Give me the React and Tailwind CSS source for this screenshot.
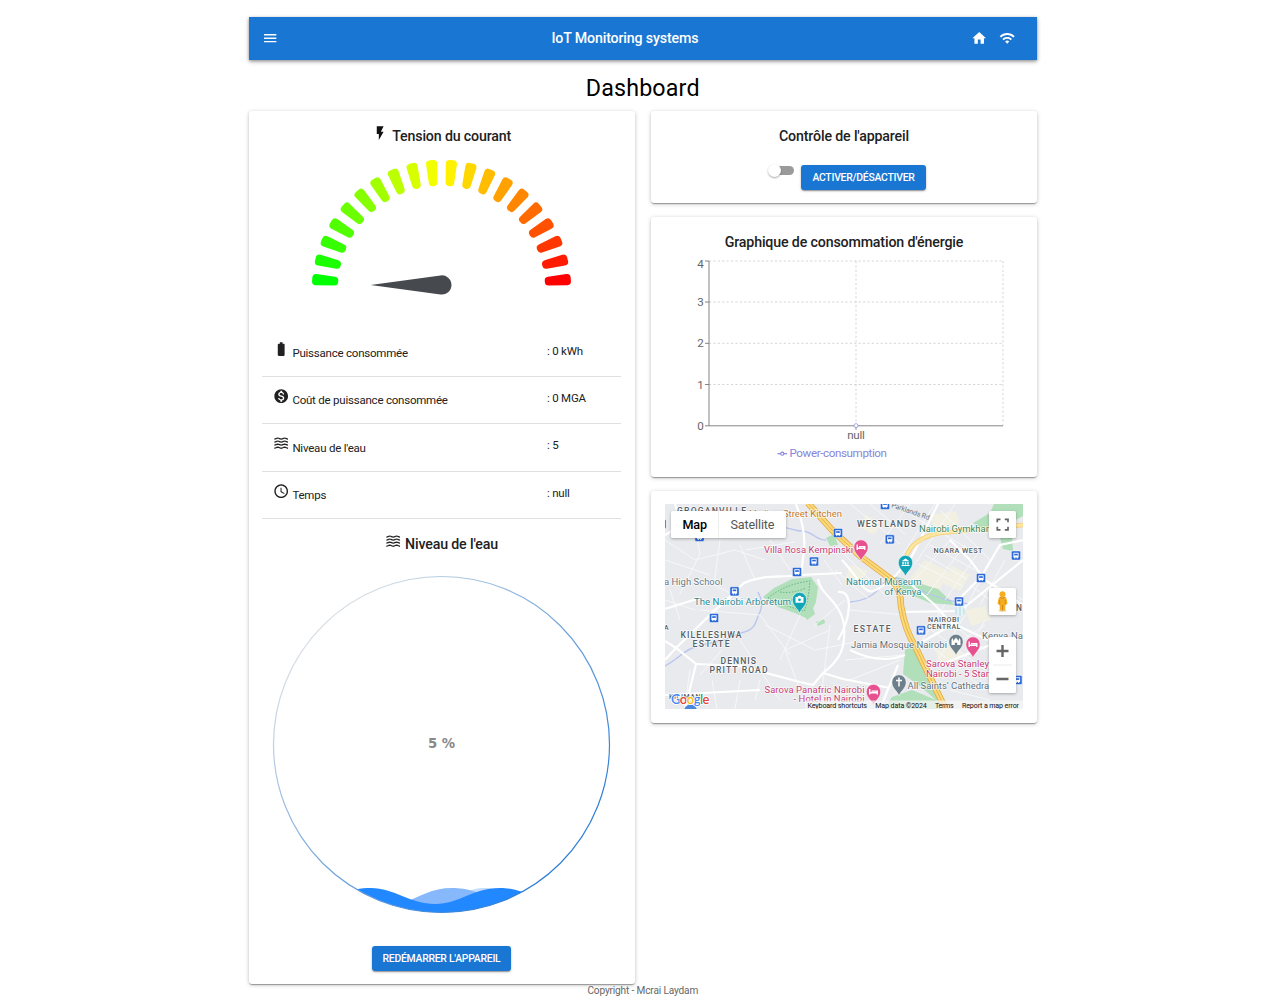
import React from "react";
import {
  MdMenu,
  MdHome,
  MdWifi,
  MdFlashOn,
  MdBatteryFull,
  MdMonetizationOn,
  MdWaves,
  MdAccessTime,
} from "react-icons/md";

const cardClass =
  "bg-white rounded-[3px] shadow-[0_2px_1px_-1px_rgba(0,0,0,0.2),0_1px_1px_rgba(0,0,0,0.14),0_1px_4px_rgba(0,0,0,0.24)]";
const titleClass = "font-medium text-[14.2px] leading-[22px] tracking-[-0.15px] text-[#212121]";
const buttonClass =
  "rounded-[3px] bg-[#1976d2] text-white font-medium text-[10.4px] leading-[25px] h-[25px] tracking-[-0.25px] text-center shadow-[0_2px_1px_-1px_rgba(0,0,0,0.2),0_1px_2px_rgba(0,0,0,0.2),0_1px_3px_rgba(0,0,0,0.12)]";

function polar(cx, cy, r, deg) {
  const a = (deg * Math.PI) / 180;
  return [cx - r * Math.cos(a), cy - r * Math.sin(a)];
}

function Gauge() {
  const cx = 179.5;
  const cy = 139.5;
  const segments = Array.from({ length: 20 }, (_, i) => {
    const mid = 4.5 + i * 9;
    const round = 3.8;
    const outer = 129.7 - round;
    const inner = 103.6 + round;
    const ho = 2.55 - ((round / outer) * 180) / Math.PI;
    const hi = 2.3 - ((round / inner) * 180) / Math.PI;
    const pts = [
      polar(cx, cy, outer, mid - ho),
      polar(cx, cy, outer, mid + ho),
      polar(cx, cy, inner, mid + hi),
      polar(cx, cy, inner, mid - hi),
    ];
    return {
      points: pts.map((p) => p.map((v) => v.toFixed(2)).join(",")).join(" "),
      color: `hsl(${120 - (120 * i) / 19} 100% 50%)`,
    };
  });
  return (
    <svg className="block w-[359px] h-[182px]" viewBox="0 0 359 182">
      {segments.map((s) => (
        <polygon key={s.points} points={s.points} fill={s.color} stroke={s.color} strokeWidth="7.6" strokeLinejoin="round" />
      ))}
      <path d="M108.5 135 L178.5 125.4 A9.6 9.6 0 1 1 178.5 144.4 Z" fill="#464a4f" />
    </svg>
  );
}

function Tank() {
  return (
    <svg className="block w-[359px] h-[380px]" viewBox="262 560 359 380">
      <defs>
        <linearGradient id="ring" x1="0.15" y1="0.15" x2="0.85" y2="0.8">
          <stop offset="0" stopColor="#d9dfe4" />
          <stop offset="0.35" stopColor="#8fb6de" />
          <stop offset="1" stopColor="#2f7fd6" />
        </linearGradient>
        <clipPath id="tank">
          <circle cx="441.5" cy="744.5" r="168" />
        </clipPath>
      </defs>
      <g clipPath="url(#tank)">
        <path d="M440 905 C460 898 466 888 484 888 C505 888 515 892 530 895 V920 H440Z" fill="#c5ddfa" />
        <path d="M400 905 C420 896 432 888 452 888 C468 888 478 892 500 902 V920 H400Z" fill="#86b8fb" />
        <path d="M340 896 C352 889 360 888 371 888 C394 888 410 904 435 904 C460 904 472 888 500 888 C510 888 516 890 530 894 V920 H340Z" fill="#2288ff" />
      </g>
      <circle cx="441.5" cy="744.5" r="168" fill="none" stroke="url(#ring)" strokeWidth="1.2" />
      <text x="441.5" y="748.3" textAnchor="middle" fontFamily="DejaVu Sans" fontWeight="700" fontSize="13.3" fill="#888888">
        5 %
      </text>
    </svg>
  );
}

const rows = [
  [MdBatteryFull, "Puissance consommée", ": 0 kWh"],
  [MdMonetizationOn, "Coût de puissance consommée", ": 0 MGA"],
  [MdWaves, "Niveau de l'eau", ": 5"],
  [MdAccessTime, "Temps", ": null"],
];

function Chart() {
  return (
    <svg className="block w-[386px] h-[215px]" viewBox="651 253 386 215" fontFamily="Roboto" fontSize="11.6" fill="#666666">
      <g stroke="#cccccc" strokeWidth="0.8" strokeDasharray="2.2 2.2">
        {[261, 302, 343.3, 384.5].map((y) => (
          <path key={y} d={`M709 ${y}H1003`} />
        ))}
        <path d="M856 261V425.5M1003 261V425.5" />
      </g>
      <path d="M709 261V425.8H1003M705 261h4M705 302h4M705 343.3h4M705 384.5h4M705 425.8h4M856 425.8v4" stroke="#777777" strokeWidth="0.9" fill="none" />
      {[[4, 264], [3, 302], [2, 343.3], [1, 384.5], [0, 426]].map(([n, y]) => (
        <text key={n} x="703.8" y={y + 4} textAnchor="end">
          {n}
        </text>
      ))}
      <text x="856" y="439" textAnchor="middle" textLength="17.5">null</text>
      <circle cx="856" cy="425.6" r="2" fill="white" stroke="#8884d8" strokeWidth="0.7" />
      <path d="M777.5 453.7h9.5" stroke="#8884d8" strokeWidth="1.2" />
      <circle cx="782.3" cy="453.7" r="1.6" fill="white" stroke="#8884d8" strokeWidth="1.1" />
      <text x="789.5" y="456.5" fill="#8884d8" textLength="97.5">
        Power-consumption
      </text>
    </svg>
  );
}

function Pin({ x, y, color, kind }) {
  return (
    <g transform={`translate(${x} ${y})`}>
      <path d="M0 14 C-1.5 9 -7.2 6.5 -7.2 0 A7.2 7.2 0 0 1 7.2 0 C7.2 6.5 1.5 9 0 14Z" fill={color} stroke="white" strokeWidth="0.6" />
      {kind === "bed" && <path d="M-3.8 -2.5V3M-3.8 1.3H3.8V3M-2 -0.4H3.8V1.3" stroke="white" strokeWidth="1.4" fill="none" />}
      {kind === "camera" && (
        <>
          <path d="M-4 -2.5h2l1-1.2h2l1 1.2h2v5.8h-8z" fill="white" />
          <circle cx="0" cy="0.3" r="1.4" fill={color} />
        </>
      )}
      {kind === "museum" && <path d="M-4 -1.2L0 -4L4 -1.2ZM-3.2 -0.6h1.4V2h-1.4zM-0.7 -0.6h1.4V2h-1.4zM1.8 -0.6h1.4V2h-1.4zM-4 2.5h8v1.1h-8z" fill="white" />}
      {kind === "mosque" && <path d="M-4.5 3.5V-1.5L-3.6 -3.5L-2.7 -1.5V0C-2.2 -2 -0.8 -2.4 0 -4C0.8 -2.4 2.2 -2 2.7 0V-1.5L3.6 -3.5L4.5 -1.5V3.5H1.2V1.2H-1.2V3.5Z" fill="white" />}
      {kind === "cross" && <path d="M0 -4.5V4.5M-3 -1.5H3" stroke="white" strokeWidth="1.5" />}
    </g>
  );
}

const stops = [
  [885, 505], [838, 533], [889.8, 539.3], [814, 561.5], [797, 572], [734.5, 591.3], [714, 618],
  [1016, 555.5], [981, 578], [959, 601.5], [921, 630.3], [1017.5, 680], [699.5, 537], [661.5, 524],
];

const labels = [
  ["GROGANVILLE", 677, 514, 69, 8.6, "#555f66", 500],
  ["Mediterr", 749, 517, 33, 9, "#c77a2c", 400],
  ["Street Kitchen", 783, 516.5, 59, 9.5, "#c77a2c", 400],
  ["WESTLANDS", 857, 526.5, 59, 8.8, "#555f66", 500],
  ["Nairobi Gymkhana", 919, 532, 77, 9.5, "#3c8659", 400],
  ["NGARA WEST", 933.5, 552.5, 49, 7.2, "#555f66", 500],
  ["Villa Rosa Kempinski", 764, 553, 89, 9.5, "#c93c76", 400],
  ["National Museum", 846, 585.3, 75.5, 9.5, "#2d8a91", 400],
  ["of Kenya", 884.5, 595, 37, 9.5, "#2d8a91", 400],
  ["a High School", 664, 585.3, 58.5, 9.5, "#6b7a82", 400],
  ["The Nairobi Arboretum", 694, 605.3, 97, 9.7, "#2d8a91", 400],
  ["KILELESHWA", 680.5, 637.6, 61, 8.6, "#555f66", 500],
  ["ESTATE", 692.5, 646.6, 37, 8.6, "#555f66", 500],
  ["DENNIS", 720.5, 664.3, 35.5, 8.6, "#555f66", 500],
  ["PRITT ROAD", 709.5, 673, 58, 8.6, "#555f66", 500],
  ["ESTATE", 853.5, 632, 37, 8.6, "#555f66", 500],
  ["NAIROBI", 928, 622, 31, 7.2, "#555f66", 500],
  ["CENTRAL", 927, 629, 33.5, 7.2, "#555f66", 500],
  ["Jamia Mosque Nairobi", 851, 647.7, 96, 9.5, "#62717a", 400],
  ["Kenya Na", 982, 639, 41, 9.5, "#62717a", 400],
  ["Sarova Stanley", 926, 667, 63, 9.5, "#c93c76", 400],
  ["Nairobi - 5 Star", 926, 676.5, 63, 9.5, "#c93c76", 400],
  ["All Saints’ Cathedral", 907.5, 688.5, 84, 9.5, "#62717a", 400],
  ["Sarova Panafric Nairobi", 764.5, 692.7, 100, 9.5, "#c93c76", 400],
  ["- Hotel in Nairobi", 793.5, 702, 71, 9.5, "#c93c76", 400],
  ["KILIMANI", 669, 698.5, 34, 7, "#555f66", 500],
  ["A", 664, 630, 5, 7, "#555f66", 500],
  ["N", 1016, 610.5, 7, 8.3, "#555f66", 500],
];

function MapArt() {
  return (
    <svg className="block w-[358px] h-[205px]" viewBox="665 504 358 205" preserveAspectRatio="none" fontFamily="Roboto">
      <rect x="665" y="504" width="358" height="205" fill="#e8eaed" />
      <g fill="#f2f0e3">
        <path d="M866 515l16 8-8 12-14-8zM925 560l25 12-12 20-28-14zM952 566l18 9-10 16-18-8zM850 565l18 6-6 10-16-4zM935 650l20-6 8 12-22 10zM965 610l20-4 6 14-20 6zM930 515l26-4 4 12-25 8z" />
      </g>
      <g fill="#b0dfba">
        <path d="M763 597L774 588L792 579L811 577L818 587L816 602L808 619L795 613L778 607Z" />
        <path d="M803 612l10-4 2 6-8 6zM816 622l8-3 1 4-7 3z" />
        <path d="M973 523L990 513L994 504H1023V516L1004 526L980 528Z" />
        <path d="M1000 538H1012L1013 551L1003 549Z" />
        <path d="M894 576L915 582L938 589L955 605L930 603L900 590Z" />
        <path d="M826 538L834 534L838 545L830 546Z" />
        <path d="M905 650L912 642L922 656L945 704L936 700L920 686L903 674Z" />
        <path d="M884 709L892 697L912 690L936 700L946 709Z" />
      </g>
      <path d="M768 598Q785 584 810 581Q808 603 804 611Q785 606 768 598M780 592q12 2 26-4M782 600q12 1 22-2" fill="none" stroke="#62b383" strokeWidth="1" strokeDasharray="1.5 1.5" />
      <g fill="none" stroke="#b8c4ef" strokeWidth="1.3">
        <path d="M665 666C680 658 684 650 695 647C718 640 725 642 740 633C758 630 755 620 760 612Q764 602 758 592" />
        <path d="M765 526C780 524 788 529 800 531C812 530 816 541 826 540" />
        <path d="M850 602Q872 600 882 585T915 588Q945 602 970 604" />
      </g>
      <g fill="none" stroke="#f7f8fa" strokeWidth="0.9">
        <path d="M665 540l30 20 40-10 30 10M690 504l10 50-20 40M720 540l-6 45 40 20M740 545l15 35M665 560l45 15M680 620l-10-30M700 610l60 5 30 40M765 625l50 25 40-8M740 640l40 60M780 660l20-45M800 690l-15-40 45-20M830 625l-8 65M845 600l-30 25M842 585l-18-25M690 670l-5 35M712 680l5 29M740 680l-5 29M665 600l30 10M770 540l20 30M745 550l50-8M722 650l-22 25M760 680l-5 20" />
        <path d="M850 504l50 40M870 504l35 30M895 504l30 20M910 504l-30 40M935 504l-35 55M955 504l-40 60M920 520l50 30M940 510l50 50M930 545l45 25M925 555l42 24M918 564l45 22M950 540l-40 45M965 545l-38 50M980 550l-35 50M985 580l38 20M970 585l40 30M990 560l-25 50M1005 560l-25 45M935 610l50 40M925 625l60 45M930 645l55 45M945 604l-28 45M965 615l-30 50M985 620l-30 55M955 645l30-20M950 690l40 10M840 550l45 45M835 570l35 30M850 610l55 5M845 660l60-5M850 680l50-20" />
      </g>
      <g fill="none" stroke="#ffffff" strokeWidth="2.2">
        <path d="M665 641L676 648L696 664L685 709M676 648L665 660M676 648L713 612L744 583C765 574 780 578 800 575L842 573" />
        <path d="M696 664L740 666L800 682L813 685L823 673L843 679L890 688" />
        <path d="M823 673C840 660 846 648 844 625C840 600 820 595 818 579" />
        <path d="M801 575L804 550Q806 530 796 504M736 591L728 600L712 612" />
        <path d="M842 560C870 590 862 605 896 575L912 556L938 504" />
        <path d="M906 580L935 605L950 622L988 640M958 600L981 577L1000 545L1023 540" />
        <path d="M950 540L970 560L985 580L1023 605M902 612L960 611L1023 560" />
        <path d="M838 592C855 590 850 620 838 640M850 650Q880 665 905 655M665 609L700 598M917 645L960 620M940 665L990 645" />
        <path d="M675 504L682 525L665 535M665 695L760 690M880 709L898 665" />
      </g>
      <g fill="none" strokeLinecap="butt">
        <path d="M904 572Q904 552 916 543Q928 533 950 532L1023 525" stroke="#f5cf72" strokeWidth="4.4" />
        <path d="M904 572Q904 552 916 543Q928 533 950 532L1023 525" stroke="#fde6a1" strokeWidth="2.8" />
        <path d="M808 503L832 530L860 556L892 580Q901 590 901 606Q905 630 915 646L946 710" stroke="#dfa842" strokeWidth="6.5" />
        <path d="M808 503L832 530L860 556L892 580Q901 590 901 606Q905 630 915 646L946 710" stroke="#fdd877" strokeWidth="5" />
        <path d="M808 503L832 530L860 556L892 580Q901 590 901 606Q905 630 915 646L946 710" stroke="#e2b04a" strokeWidth="0.9" />
      </g>
      <text transform="translate(891 507) rotate(19)" fontSize="7" fill="#68737a" textLength="40">Parklands Rd</text>
      <circle cx="960" cy="611" r="5" fill="#c9e7ea" />
      <path d="M958 606v10M962 606v10" stroke="white" strokeWidth="1" />
      {stops.map(([x, y]) => (
        <g key={`${x}-${y}`} transform={`translate(${x} ${y})`}>
          <rect x="-4.6" y="-4.6" width="9.2" height="9.2" rx="1.4" fill="#2b68d8" stroke="#ffffff" strokeWidth="0.5" />
          <path d="M-2.6 -2.8h5.2v4.9h-0.9v1h-1v-1h-1.4v1h-1v-1h-0.9z" fill="white" />
          <path d="M-1.8 -1.8h3.6v1.7h-3.6z" fill="#2b68d8" />
        </g>
      ))}
      {labels.map(([t, x, y, w, size, fill, weight]) => (
        <text key={`${t}${x}${y}`} x={x} y={y} textLength={w} fontSize={size} fill={fill} fontWeight={weight} stroke="#ffffff" strokeOpacity="0.75" strokeWidth="1.6" paintOrder="stroke" strokeLinejoin="round">
          {t}
        </text>
      ))}
      <Pin x={861} y={547} color="#e8518f" kind="bed" />
      <Pin x={905.5} y={562.5} color="#12a5b5" kind="museum" />
      <Pin x={799.5} y={599.5} color="#12a5b5" kind="camera" />
      <Pin x={956} y={641.5} color="#6c7f8a" kind="mosque" />
      <Pin x={973} y={644} color="#e8518f" kind="bed" />
      <Pin x={899} y={682} color="#6c7f8a" kind="cross" />
      <Pin x={873.5} y={691.5} color="#e8518f" kind="bed" />
      <circle cx="690.5" cy="711" r="6.5" fill="#4b86dd" />
      <text x="671" y="704.2" fontFamily="Lato" fontWeight="600" fontSize="13" textLength="38.5" stroke="#ffffff" strokeWidth="1.6" paintOrder="stroke">
        <tspan fill="#4285f4">G</tspan>
        <tspan fill="#ea4335">o</tspan>
        <tspan fill="#fbbc05">o</tspan>
        <tspan fill="#4285f4">g</tspan>
        <tspan fill="#34a853">l</tspan>
        <tspan fill="#ea4335">e</tspan>
      </text>
      <rect x="805" y="700.5" width="218" height="8.5" fill="#f5f5f5" fillOpacity="0.75" />
      <g fontSize="7.1" fill="#111111">
        <text x="807.5" y="707.8" textLength="59.5">Keyboard shortcuts</text>
        <text x="875.3" y="707.8" textLength="51.5">Map data ©2024</text>
        <text x="935" y="707.8" textLength="18.7">Terms</text>
        <text x="962" y="707.8" textLength="57">Report a map error</text>
      </g>
    </svg>
  );
}

const controlClass = "absolute right-[7px] w-[27px] bg-white rounded-[1.5px] shadow-[0_1px_3px_rgba(0,0,0,0.3)]";

function MapPanel() {
  return (
    <div className="relative w-[358px] h-[205px] overflow-hidden">
      <MapArt />
      <div className="absolute left-[6px] top-[7px] flex h-[27px] w-[115.5px] bg-white rounded-[1.5px] shadow-[0_1px_3px_rgba(0,0,0,0.3)] text-[12.6px] leading-[27px] tracking-[-0.15px] text-center">
        <div className="w-12 pl-px font-medium text-black border-r border-[#eeeeee]">Map</div>
        <div className="flex-1 text-[#565656]">Satellite</div>
      </div>
      <div className={`${controlClass} top-[7px] h-[27px]`}>
        <svg className="block w-[27px] h-[27px]" viewBox="0 0 27 27">
          <path d="M8.3 11.3V8.3H11.5M15.8 8.3H19V11.3M19 15.7V18.8H15.8M11.5 18.8H8.3V15.7" fill="none" stroke="#666666" strokeWidth="1.7" />
        </svg>
      </div>
      <div className={`${controlClass} top-[84px] h-[27px]`}>
        <svg className="block w-[27px] h-[27px]" viewBox="0 0 27 27">
          <ellipse cx="13.5" cy="22.8" rx="4" ry="1.1" fill="#e8d9b5" />
          <path d="M9.5 10.5Q10 8.8 13.5 8.8T17.5 10.5L18.5 16L17 16.5L16.3 14V22.5H10.7V14L10 16.5L8.5 16Z" fill="#f5ae23" />
          <path d="M13.5 17V22.5M10.7 12V17M16.3 12V17" stroke="#c98312" strokeWidth="0.8" />
          <path d="M10.7 9.3Q13.5 11.5 16.3 9.3" stroke="#c98312" strokeWidth="0.8" fill="none" />
          <circle cx="13.5" cy="6.3" r="3" fill="#f5ae23" />
        </svg>
      </div>
      <div className={`${controlClass} top-[133px] h-[56px]`}>
        <svg className="block w-[27px] h-[56px]" viewBox="0 0 27 56">
          <path d="M7.5 14H19.5M13.5 8V20M7.5 42H19.5" stroke="#666666" strokeWidth="2.4" />
          <path d="M4 28H23" stroke="#e6e6e6" strokeWidth="0.8" />
        </svg>
      </div>
    </div>
  );
}

export default function App() {
  return (
    <div className="w-[1280px] h-[1008px] overflow-hidden bg-white pt-[16.5px] font-['Roboto',sans-serif]">
      <div className="ml-[248.5px] w-[788.5px]">
        <header className="flex h-[43.5px] items-center bg-[#1976d2] text-white shadow-[0_1px_3px_rgba(0,0,0,0.35),0_2px_5px_rgba(0,0,0,0.18)]">
          <MdMenu className="ml-[13.7px] size-[16.4px]" />
          <div className="flex-1 pt-px text-center font-medium text-[14.2px] tracking-[-0.15px]">IoT Monitoring systems</div>
          <MdHome className="size-[16.4px]" />
          <MdWifi className="ml-[11px] mr-[22px] size-[16.4px]" />
        </header>
        <h1 className="mt-[12px] h-[38.5px] text-center text-[23.26px] leading-[32px] tracking-[0.17px] text-black">Dashboard</h1>
        <div className="flex items-start gap-[16.5px]">
          <section className={`${cardClass} h-[873.5px] w-[386px] px-[13.5px]`}>
            <div className="flex h-[39.5px] justify-center pt-[14px]">
              <MdFlashOn className="mr-[4px] size-[16.4px] text-[#111111]" />
              <h2 className={titleClass}>Tension du courant</h2>
            </div>
            <Gauge />
            <div className="-mt-[2.5px]">
              {rows.map(([Icon, label, value]) => (
                <div key={label} className="flex h-[47.4px] border-b border-[#e0e0e0] text-[11.5px] leading-[16px] tracking-[-0.22px] text-[#212121]">
                  <Icon className="ml-[11px] mt-[11px] size-[16.4px]" />
                  <div className="ml-[3px] mt-[15.4px] w-[254.6px]">{label}</div>
                  <div className="mt-[13px]">{value}</div>
                </div>
              ))}
            </div>
            <div className="flex h-[40.5px] justify-center pt-[13.9px]">
              <MdWaves className="mr-[3.5px] size-[16.4px] text-[#222222]" />
              <h2 className={titleClass}>Niveau de l'eau</h2>
            </div>
            <Tank />
            <button className={`${buttonClass} mx-auto mt-[6px] block w-[139px]`}>REDÉMARRER L'APPAREIL</button>
          </section>
          <div className="flex w-[386px] flex-col gap-[14px]">
            <section className={`${cardClass} h-[92.5px] pt-[14px]`}>
              <h2 className={`${titleClass} text-center`}>Contrôle de l'appareil</h2>
              <div className="ml-[116.5px] mt-[18.4px] flex items-start">
                <div className="mt-[1px] flex h-[9px] w-[26px] items-center rounded-full bg-[linear-gradient(90deg,transparent_8px,#9a9a9a_8px)]">
                  <span className="size-[13.5px] shrink-0 rounded-full bg-white shadow-[0_1px_2px_rgba(0,0,0,0.35)]" />
                </div>
                <button className={`${buttonClass} ml-[7.5px] w-[125px]`}>ACTIVER/DÉSACTIVER</button>
              </div>
            </section>
            <section className={`${cardClass} h-[259.5px] pt-[14px]`}>
              <h2 className={`${titleClass} text-center`}>Graphique de consommation d'énergie</h2>
              <Chart />
            </section>
            <section className={`${cardClass} h-[232.5px] p-[13.7px]`}>
              <MapPanel />
            </section>
          </div>
        </div>
        <footer className="text-center text-[10.1px] leading-[13px] tracking-[-0.15px] text-[#666666]">Copyright - Mcrai Laydam</footer>
      </div>
    </div>
  );
}
